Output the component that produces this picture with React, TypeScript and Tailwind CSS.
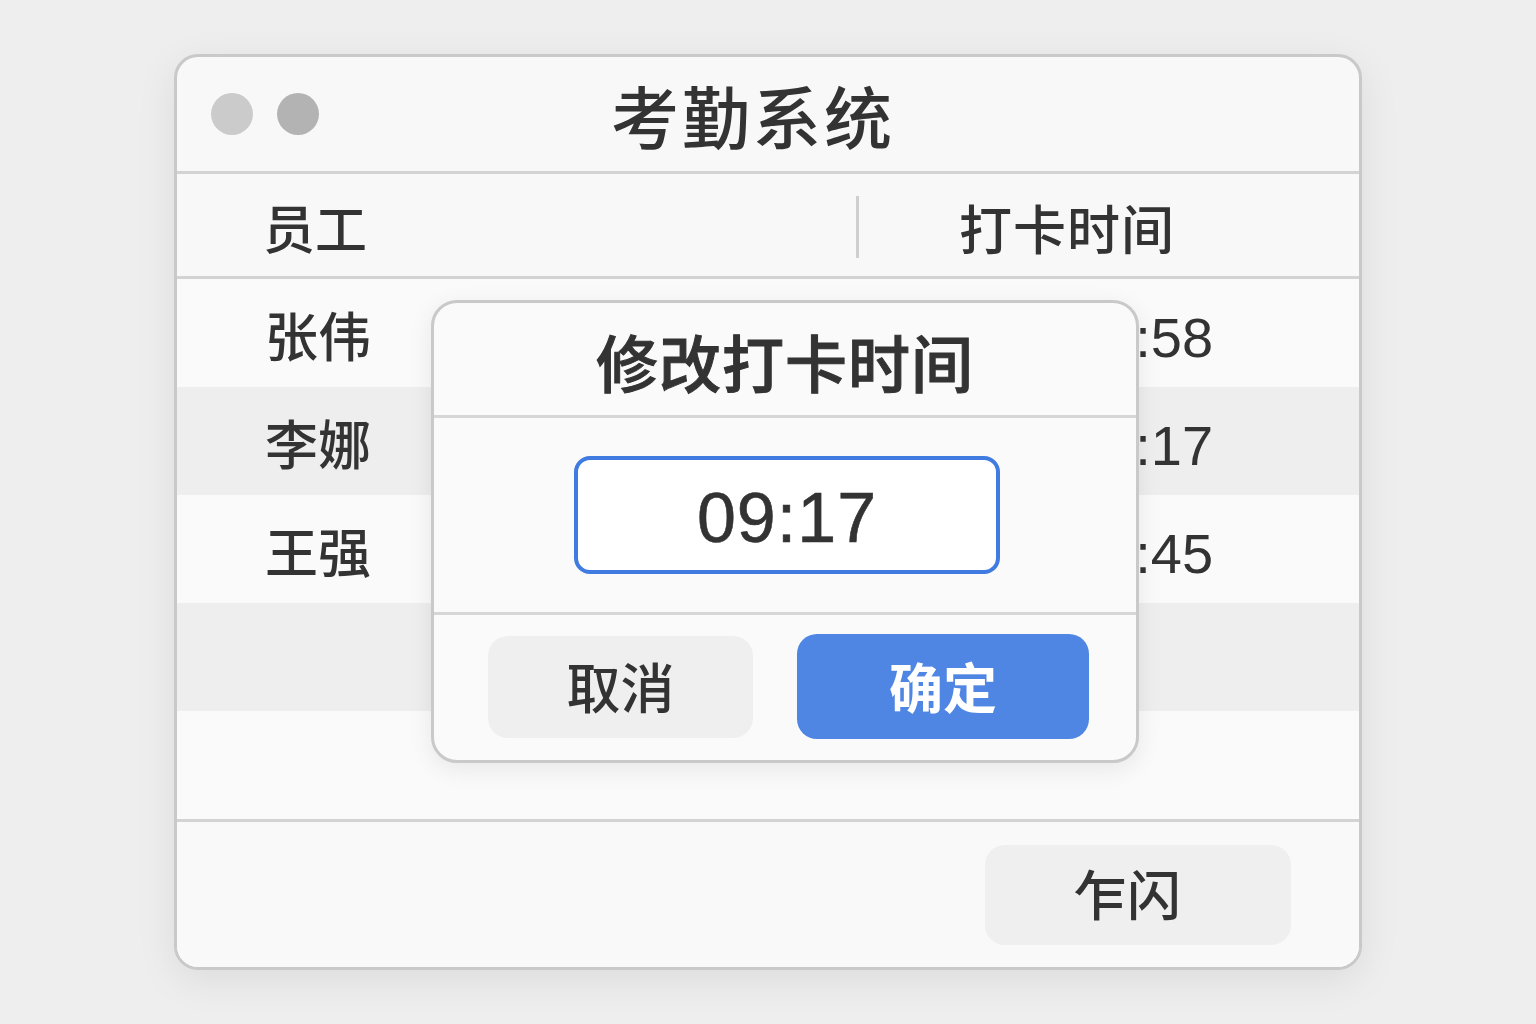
import React from "react";

const cjk = "font-['Liberation_Sans','Noto_Sans_CJK_SC',sans-serif]";

const rows = [
  { name: "张伟", time: "08:58", shade: false },
  { name: "李娜", time: "09:17", shade: true },
  { name: "王强", time: "08:45", shade: false },
  { name: "", time: "", shade: true },
  { name: "", time: "", shade: false },
];

export default function App() {
  return (
    <div className={`w-[1536px] h-[1024px] bg-[#eeeeee] flex items-center justify-center text-[#333333] ${cjk}`}>
      {/* Window */}
      <div className="relative w-[1188px] h-[916px] rounded-[24px] border-[3px] border-[#c9c9c9] bg-[#f8f8f8] shadow-[0_10px_40px_rgba(0,0,0,0.08)] overflow-hidden flex flex-col">
        {/* Title bar */}
        <div className="relative h-[117px] shrink-0 border-b-[3px] border-[#d3d3d3] flex items-center justify-center">
          <div className="absolute left-[34px] top-[36px] flex items-center gap-[24px]">
            <span className="w-[42px] h-[42px] rounded-full bg-[#cbcbcb]" />
            <span className="w-[42px] h-[42px] rounded-full bg-[#b3b3b3]" />
          </div>
          <h1 className="text-[68px] font-medium leading-none tracking-[3px] mr-[30px] mt-[12px]">考勤系统</h1>
        </div>

        {/* Table header */}
        <div className="h-[105px] shrink-0 border-b-[3px] border-[#d3d3d3] flex items-center">
          <div className="w-[679px] pl-[86px] pt-[12px] text-[52px] font-medium leading-none">员工</div>
          <div className="w-[3px] h-[62px] mt-[4px] bg-[#cfcfcf]" />
          <div className="flex-1 pl-[100px] pt-[12px] text-[53px] font-medium leading-none tracking-[1px]">打卡时间</div>
        </div>

        {/* Rows */}
        <div className="flex flex-col shrink-0">
          {rows.map((r, i) => (
            <div
              key={i}
              className={`h-[108px] flex items-center pt-[10px] ${r.shade ? "bg-[#eeeeee]" : "bg-[#fafafa]"}`}
            >
              <div className="w-[682px] pl-[88px] text-[53px] font-medium leading-none">{r.name}</div>
              <div className="flex-1 pl-[214px] text-[56px] leading-none">{r.time}</div>
            </div>
          ))}
        </div>

        {/* Footer */}
        <div className="flex-1 border-t-[3px] border-[#d3d3d3] bg-[#f9f9f9] flex items-center justify-end pr-[68px]">
          <button className="w-[306px] h-[100px] rounded-[20px] bg-[#efefef] text-[54px] font-medium leading-none flex items-center justify-center pr-[22px] pt-[4px]">
            乍闪
          </button>
        </div>

        {/* Dialog */}
        <div className="absolute left-[254px] top-[243px] w-[708px] h-[463px] rounded-[26px] border-[3px] border-[#c9c9c9] bg-[#fafafa] shadow-[0_6px_24px_rgba(0,0,0,0.08)] flex flex-col">
          <div className="h-[115px] shrink-0 border-b-[3px] border-[#d6d6d6] flex items-center justify-center">
            <span className="text-[62px] font-medium leading-none tracking-[1px] mt-[16px] [-webkit-text-stroke:1px_#333333]">修改打卡时间</span>
          </div>
          <div className="h-[197px] shrink-0 border-b-[3px] border-[#d6d6d6] flex items-center justify-center">
            <div className="w-[426px] h-[118px] ml-[4px] rounded-[16px] border-4 border-[#3f7be0] bg-white flex items-center justify-center">
              <span className="text-[70px] leading-none font-['Liberation_Sans',sans-serif] tracking-[1px] mt-[6px] [-webkit-text-stroke:0.6px_#333333]">09:17</span>
            </div>
          </div>
          <div className="flex-1 flex items-center pl-[54px] gap-[44px] pb-[2px]">
            <button className="w-[265px] h-[102px] rounded-[20px] bg-[#efefef] text-[54px] font-medium leading-none flex items-center justify-center pt-[6px]">
              取消
            </button>
            <button className="w-[292px] h-[105px] rounded-[20px] bg-[#4f86e3] text-white text-[54px] font-bold leading-none flex items-center justify-center pt-[6px]">
              确定
            </button>
          </div>
        </div>
      </div>
    </div>
  );
}
